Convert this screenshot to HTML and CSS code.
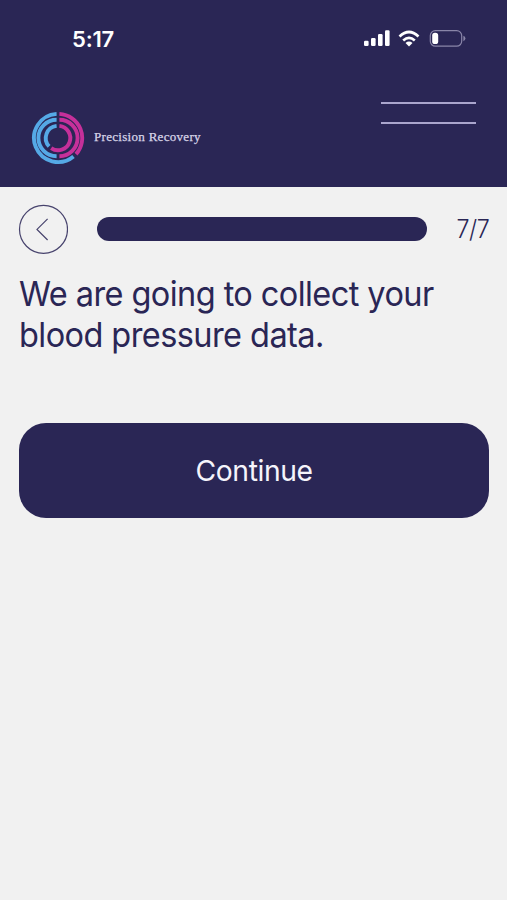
FILE: index.html
```html
<!DOCTYPE html>
<html lang="en">
<head>
<meta charset="utf-8">
<title>Precision Recovery</title>
<link rel="stylesheet" href="styles.css">
</head>
<body>
<header class="header">
  <div class="status">
    <span class="time">5:17</span>
    <svg class="status-icons" width="104" height="20" viewBox="0 0 104 20">
      <g fill="#fff">
        <rect x="1" y="11.8" width="4.6" height="5.2" rx="1.2"/>
        <rect x="8" y="9" width="4.6" height="8" rx="1.2"/>
        <rect x="15" y="5" width="4.6" height="12" rx="1.2"/>
        <rect x="22" y="1.2" width="4.6" height="15.8" rx="1.2"/>
        <path d="M46 17.4l-3.5-3.5q3.5-2.8 7 0z"/>
      </g>
      <g fill="none" stroke="#fff" stroke-width="2.7">
        <path d="M36.5 7.4q9.5-8.8 19 0"/>
        <path d="M40.2 11.4q5.8-5 11.6 0"/>
      </g>
      <rect x="67.3" y="1.6" width="31.4" height="15.6" rx="5" fill="none" stroke="#8985a8" stroke-width="1.2"/>
      <rect x="69.2" y="3.7" width="6" height="11.4" rx="2.7" fill="#fff"/>
      <path d="M100.4 6.8q2 .8 2 2.7t-2 2.7z" fill="#8985a8"/>
    </svg>
  </div>
  <div class="nav">
    <div class="brand">
      <svg width="54" height="54" viewBox="-27 -27 54 54" fill="none" stroke-width="3.9">
        <g stroke="#55a9e6">
          <path d="M-1.4 -24.1A24.1 24.1 0 1 0 15.5 18.5"/>
          <path d="M-1.4 -18.2A18.2 18.2 0 0 0 -1.4 18.2"/>
          <path d="M-1.4 -12.1A12.2 12.2 0 0 0 -8.9 8.4"/>
        </g>
        <g stroke="#c5309a">
          <path d="M1.4 -24.1A24.1 24.1 0 0 1 18 16.1"/>
          <path d="M1.4 -18.2A18.2 18.2 0 0 1 1.4 18.2"/>
          <path d="M1.4 -12.1A12.2 12.2 0 1 1 -6.8 10.1"/>
        </g>
      </svg>
      <span class="brand-name">Precision Recovery</span>
    </div>
    <div class="menu"></div>
  </div>
</header>
<main class="content">
  <div class="progress">
    <svg width="50" height="50" viewBox="0 0 50 50" fill="none" stroke="#47436d" stroke-width="1.2">
      <circle cx="25.5" cy="25.3" r="24"/>
      <path d="M29.6 14.8L19 25.4 29.6 36"/>
    </svg>
    <div class="bar"></div>
    <span class="count">7/7</span>
  </div>
  <h1 class="title"><span class="line">We are going to collect your</span> <span class="line">blood pressure data.</span></h1>
  <button class="continue"><span class="label">Continue</span></button>
</main>
</body>
</html>
```
FILE: styles.css
```css
* {
  box-sizing: border-box;
}

body {
  margin: 0;
  min-height: 900px;
  background: #f1f1f1;
  color: #2a2655;
  font-family: Inter, "Liberation Sans", sans-serif;
}

.header {
  height: 187px;
  background: #2a2655;
}

.status {
  display: flex;
  align-items: flex-start;
  justify-content: space-between;
  height: 102px;
  padding: 25px 40px 0 72px;
}

.time {
  color: #fff;
  font-size: 22px;
  font-weight: 600;
  line-height: 28px;
  letter-spacing: -0.2px;
}

.status-icons {
  margin-top: 4px;
}

.nav {
  display: flex;
  align-items: flex-start;
  justify-content: space-between;
  padding: 0 31px;
}

.brand {
  display: flex;
  align-items: center;
  gap: 9px;
  margin-top: 9px;
}

.brand-name {
  margin-top: -2px;
  color: #d8d5e8;
  font-family: "Liberation Serif", serif;
  font-size: 13px;
  letter-spacing: 0.3px;
  -webkit-text-stroke: 0.25px #d8d5e8;
  white-space: nowrap;
}

.menu {
  width: 95px;
  height: 22px;
  border-top: 2px solid #aaa5cd;
  border-bottom: 2px solid #aaa5cd;
}

.content {
  padding: 17px 18px 0;
}

.progress {
  display: flex;
  align-items: center;
}

.bar {
  width: 330px;
  height: 24px;
  margin-left: 29px;
  border-radius: 12px;
  background: #2a2655;
}

.count {
  margin-left: auto;
  font-size: 25px;
  font-weight: 300;
  letter-spacing: -0.5px;
  transform: scaleX(0.93);
  transform-origin: right;
}

.title {
  margin: 19px 0 0 1px;
  font-size: 34px;
  font-weight: 400;
  line-height: 41px;
  letter-spacing: -0.6px;
}

.line {
  display: block;
  white-space: nowrap;
  transform: scaleX(0.956);
  transform-origin: left;
}

.continue {
  display: flex;
  align-items: center;
  justify-content: center;
  width: 470px;
  height: 95px;
  margin: 68px 0 0 1px;
  padding: 0;
  border: 0;
  border-radius: 27px;
  background: #2a2655;
  color: #f5f4fb;
  font: inherit;
  font-size: 29px;
  letter-spacing: -0.4px;
}

.label {
  transform: scaleX(0.975);
}
```
